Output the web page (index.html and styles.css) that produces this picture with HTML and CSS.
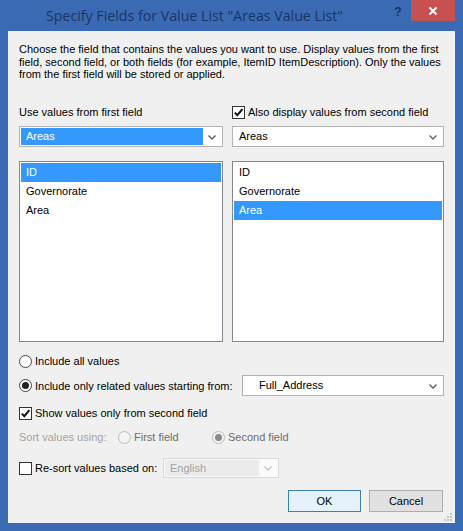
FILE: index.html
```html
<!DOCTYPE html>
<html>
<head>
<meta charset="utf-8">
<title>Specify Fields for Value List</title>
<link rel="stylesheet" href="styles.css">
</head>
<body>
<div class="window">
  <div class="titlebar">
    <div class="title">Specify Fields for Value List "Areas Value List"</div>
    <div class="help-btn">?</div>
    <div class="close-btn">
      <svg width="10" height="10" viewBox="0 0 10 10"><path d="M1.5 1.5 L8.5 8.5 M8.5 1.5 L1.5 8.5" stroke="#fff" stroke-width="2" fill="none"/></svg>
    </div>
  </div>
  <div class="content">
    <p class="intro">Choose the field that contains the values you want to use. Display values from the first field, second field, or both fields (for example, ItemID ItemDescription). Only the values from the first field will be stored or applied.</p>

    <div class="columns">
      <div class="col col-left">
        <div class="col-label">Use values from first field</div>
        <div class="combo">
          <span class="combo-value selected">Areas</span>
          <span class="combo-arrow"><svg width="8" height="5" viewBox="0 0 8 5"><polyline points="0.5,0.5 4,4 7.5,0.5" fill="none" stroke="#606060" stroke-width="1.4"/></svg></span>
        </div>
        <ul class="listbox">
          <li class="item active">ID</li>
          <li class="item">Governorate</li>
          <li class="item">Area</li>
        </ul>
      </div>
      <div class="col col-right">
        <div class="col-label">
          <span class="checkbox checked"><svg width="11" height="11" viewBox="0 0 11 11"><path d="M1.8 5.6 L4.3 8.2 L9.4 2.2" fill="none" stroke="#111" stroke-width="2"/></svg></span>
          <span class="label-text">Also display values from second field</span>
        </div>
        <div class="combo">
          <span class="combo-value">Areas</span>
          <span class="combo-arrow"><svg width="8" height="5" viewBox="0 0 8 5"><polyline points="0.5,0.5 4,4 7.5,0.5" fill="none" stroke="#606060" stroke-width="1.4"/></svg></span>
        </div>
        <ul class="listbox">
          <li class="item">ID</li>
          <li class="item">Governorate</li>
          <li class="item active">Area</li>
        </ul>
      </div>
    </div>

    <div class="row row-radio1">
      <span class="radio"></span>
      <span class="label-text">Include all values</span>
    </div>
    <div class="row row-radio2">
      <span class="radio on"><span class="dot"></span></span>
      <span class="label-text">Include only related values starting from:</span>
      <div class="combo combo-related">
        <span class="combo-value plain">Full_Address</span>
        <span class="combo-arrow"><svg width="8" height="5" viewBox="0 0 8 5"><polyline points="0.5,0.5 4,4 7.5,0.5" fill="none" stroke="#606060" stroke-width="1.4"/></svg></span>
      </div>
    </div>
    <div class="row row-show">
      <span class="checkbox checked"><svg width="11" height="11" viewBox="0 0 11 11"><path d="M1.8 5.6 L4.3 8.2 L9.4 2.2" fill="none" stroke="#111" stroke-width="2"/></svg></span>
      <span class="label-text">Show values only from second field</span>
    </div>
    <div class="row row-sort">
      <span class="sort-label">Sort values using:</span>
      <span class="sort-option sort-first">
        <span class="radio disabled"></span>
        <span class="label-text dim">First field</span>
      </span>
      <span class="sort-option">
        <span class="radio disabled on"><span class="dot"></span></span>
        <span class="label-text dim">Second field</span>
      </span>
    </div>
    <div class="row row-resort">
      <span class="resort-group">
        <span class="checkbox"></span>
        <span class="label-text">Re-sort values based on:</span>
      </span>
      <div class="combo combo-disabled">
        <span class="combo-value disabled-value">English</span>
        <span class="combo-arrow"><svg width="8" height="5" viewBox="0 0 8 5"><polyline points="0.5,0.5 4,4 7.5,0.5" fill="none" stroke="#c4c4c4" stroke-width="1.4"/></svg></span>
      </div>
    </div>
    <div class="row row-buttons">
      <button class="btn btn-default">OK</button>
      <button class="btn">Cancel</button>
    </div>

    <svg class="grip" width="9" height="9" viewBox="0 0 9 9">
      <rect x="6" y="0" width="2" height="2" fill="#c5c5c5"/>
      <rect x="3" y="3" width="2" height="2" fill="#c5c5c5"/>
      <rect x="6" y="3" width="2" height="2" fill="#c5c5c5"/>
      <rect x="0" y="6" width="2" height="2" fill="#c5c5c5"/>
      <rect x="3" y="6" width="2" height="2" fill="#c5c5c5"/>
      <rect x="6" y="6" width="2" height="2" fill="#c5c5c5"/>
    </svg>
  </div>
</div>
</body>
</html>
```
FILE: styles.css
```css
* { box-sizing: border-box; }
html, body { margin: 0; padding: 0; }
body { width: 463px; height: 531px; overflow: hidden; background: #3a6ab3; }

.window {
  width: 463px;
  height: 531px;
  background: #3a6ab3;
  display: flex;
  flex-direction: column;
}

.titlebar {
  height: 31px;
  display: flex;
  align-items: flex-start;
  flex: none;
}
.title {
  flex: 1;
  padding-left: 46px;
  font-family: "Open Sans", "Noto Sans", sans-serif;
  font-size: 14.2px;
  line-height: 32px;
  color: #1b3563;
  white-space: nowrap;
}
.help-btn {
  width: 26px;
  height: 21px;
  text-align: center;
  font-family: "Liberation Sans", sans-serif;
  font-weight: bold;
  font-size: 12px;
  line-height: 24px;
  color: #1b3563;
}
.close-btn {
  width: 44px;
  height: 21px;
  margin-right: 8px;
  background: #c75050;
  display: flex;
  align-items: center;
  justify-content: center;
}

.content {
  flex: 1;
  margin: 0 8px 8px 8px;
  background: #f0f0f0;
  padding: 12px 11px 0 11px;
  position: relative;
  font-family: "Liberation Sans", Arial, sans-serif;
  font-size: 11px;
  color: #000;
}

.intro {
  margin: 0;
  line-height: 12.7px;
  padding-right: 0;
}

.columns {
  display: flex;
  gap: 9px;
  margin-top: 24px;
}
.col { display: flex; flex-direction: column; }
.col-left { width: 204px; }
.col-right { width: 212px; }
.col-label {
  height: 14px;
  display: flex;
  align-items: center;
  line-height: 14px;
  white-space: nowrap;
}

.combo {
  height: 21px;
  margin-top: 7px;
  border: 1px solid #b3b3b3;
  background: #fff;
  display: flex;
  padding: 1px;
}
.combo-value {
  flex: 1;
  line-height: 17px;
  padding-left: 5px;
  white-space: nowrap;
}
.combo-value.selected {
  background: #3399ff;
  color: #fff;
}
.combo-arrow {
  width: 18px;
  display: flex;
  align-items: center;
  justify-content: center;
  padding-top: 1px;
}

.listbox {
  list-style: none;
  margin: 14px 0 0 0;
  padding: 1px;
  height: 181px;
  border: 1px solid #828790;
  background: #fff;
}
.item {
  height: 19px;
  line-height: 19px;
  padding-left: 5px;
}
.item.active {
  background: #3399ff;
  color: #fff;
}

.row {
  display: flex;
  align-items: center;
  white-space: nowrap;
}
.row-radio1 { height: 14px; margin-top: 12px; }
.row-radio2 { height: 21px; margin-top: 7px; }
.row-show { height: 14px; margin-top: 10px; }
.row-sort { height: 14px; margin-top: 10px; }
.row-resort { height: 20px; margin-top: 14px; }
.row-buttons { height: 22px; margin-top: 12px; justify-content: flex-end; gap: 8px; padding-right: 1px; }

.label-text { margin-left: 3px; }

.checkbox {
  width: 13px;
  height: 13px;
  border: 1px solid #333;
  background: #fff;
  display: inline-flex;
  align-items: center;
  justify-content: center;
  flex: none;
}

.radio {
  width: 13px;
  height: 13px;
  border: 1px solid #444;
  border-radius: 50%;
  background: #fff;
  display: inline-flex;
  align-items: center;
  justify-content: center;
  flex: none;
}
.radio .dot {
  width: 7px;
  height: 7px;
  border-radius: 50%;
  background: #222;
}
.radio.disabled {
  border-color: #bcbcbc;
  background: #f4f4f4;
}
.radio.disabled .dot { background: #8a8a8a; }

.combo-related {
  margin-top: 0;
  margin-left: auto;
  width: 202px;
}
.combo-related .combo-value { padding-left: 15px; }

.sort-label { width: 99px; color: #a3a3a3; }
.sort-option { display: inline-flex; align-items: center; }
.sort-first { width: 94px; }
.dim { color: #6d6d6d; }

.resort-group { width: 144px; display: inline-flex; align-items: center; }
.combo-disabled {
  margin-top: 0;
  width: 116px;
  height: 20px;
  border-color: #d9d9d9;
  background: #fafafa;
}
.disabled-value {
  background: #ebebeb;
  color: #a3a3a3;
  line-height: 16px;
}

.btn {
  width: 73px;
  height: 22px;
  border: 1px solid #adadad;
  background: #e1e1e1;
  font-family: "Liberation Sans", Arial, sans-serif;
  font-size: 11px;
  color: #000;
  padding: 0;
}
.btn + .btn { width: 74px; }
.btn-default {
  border-color: #3c7fb1;
  background: #e5f1fb;
}

.grip {
  position: absolute;
  right: 2px;
  bottom: 1px;
}
```
